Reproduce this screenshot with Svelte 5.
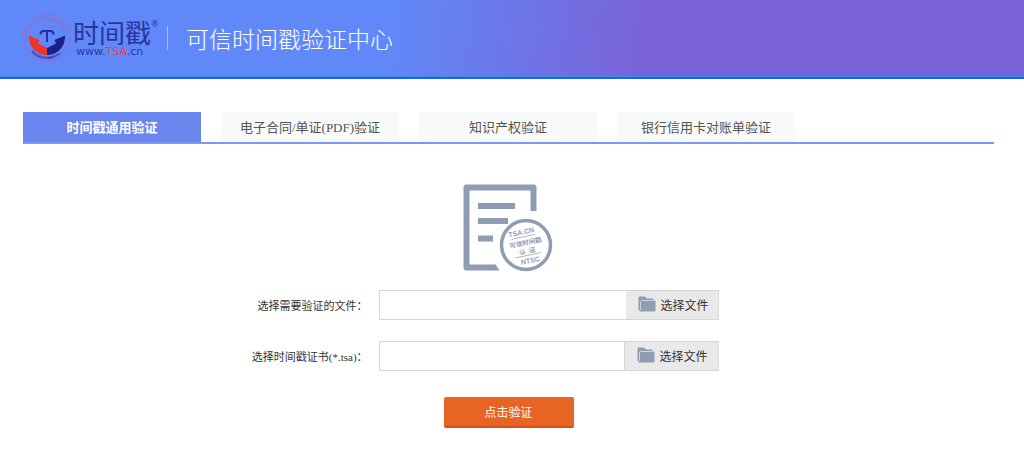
<script lang="ts">
  interface FileRow {
    id: string;
    label: string;
    divided: boolean;
  }

  const tabs = ['时间戳通用验证', '电子合同/单证(PDF)验证', '知识产权验证', '银行信用卡对账单验证'];

  const rows: FileRow[] = [
    { id: 'source-file', label: '选择需要验证的文件：', divided: false },
    { id: 'tsa-file', label: '选择时间戳证书(*.tsa)：', divided: true },
  ];

  let activeTab = $state(0);
  let paths = $state(['', '']);
</script>

<header class="header">
  <a class="logo" href="/">
    <svg class="emblem" viewBox="0 0 48 48" aria-hidden="true">
      <defs>
        <path id="ring-top" d="M5.5 30a19.3 19.3 0 1 1 37 0" />
        <path id="ring-bottom" d="M5.5 34a21 21 0 0 0 37 0" />
      </defs>
      <circle cx="24" cy="24" r="23.3" fill="none" stroke="#a566b4" stroke-width="0.9" />
      <circle cx="24" cy="24" r="18" fill="none" stroke="#8a70cc" stroke-width="0.6" />
      <text class="ring-en"><textPath href="#ring-top" startOffset="3">Certificate Time Stamp Authority</textPath></text>
      <text class="ring-cn"><textPath href="#ring-bottom" startOffset="5">联合信任时间戳服务中心</textPath></text>
      <path d="M15 13h18" stroke="#8a70cc" stroke-width="1.2" stroke-dasharray="1.5 0.8" />
      <path d="M6 21.5l10.5 4.500L15 29.500l9 4.500v7C13 41 5.500 32 6 21.500z" fill="#ee342b" />
      <path d="M42 21.500L31.500 26l1.500 3.500-9 4.500v7C35 41 42.500 32 42 21.500z" fill="#1b2089" />
      <path d="M17.500 20.500c0-2.500 1-3.500 3-3.500h7c2 0 3 1 3 3.500M24 17v11" fill="none" stroke="#25329b" stroke-width="2" />
    </svg>
    <span class="brand">
      <span class="brand-name">时间戳<sup>®</sup></span>
      <span class="brand-url">www.<em>TSA</em>.cn</span>
    </span>
  </a>
  <h1 class="title">可信时间戳验证中心</h1>
</header>

<main class="main">
  <nav class="tabs">
    {#each tabs as tab, i (tab)}
      <button type="button" class="tab" class:active={activeTab === i} onclick={() => (activeTab = i)}>{tab}</button>
    {/each}
  </nav>

  <form class="form" onsubmit={(e: Event) => e.preventDefault()}>
    <svg class="document" viewBox="0 0 92 88" aria-hidden="true">
      <path d="M70.500 27V3.500h-67v80H32" fill="none" stroke="#8f9db3" stroke-width="6" stroke-linejoin="round" />
      <path d="M31 80.500h1.500l4 6H31z" fill="#8f9db3" />
      <path d="M15 22h37M15 37h30M15 54.500h15" stroke="#8f9db3" stroke-width="6" />
      <circle cx="63" cy="61" r="24.500" fill="#fff" stroke="#8f9db3" stroke-width="3.500" />
      <g class="stamp" transform="rotate(-12 63 61)">
        <text x="61" y="50" font-size="7">TSA.CN</text>
        <path d="M50 52.500h24M50 71.500h26" stroke="#8f9db3" stroke-width="0.700" />
        <text x="63" y="61" font-size="6.500">可信时间戳</text>
        <text x="63" y="69.500" font-size="6.500">认&#160; 证</text>
        <text x="64" y="79.500" font-size="7">NTSC</text>
      </g>
    </svg>

    {#each rows as row, i (row.id)}
      <div class="row">
        <label for={row.id}>{row.label}</label>
        <div class="picker" class:divided={row.divided}>
          <input id={row.id} type="text" bind:value={paths[i]} />
          <button type="button" class="browse">
            <svg viewBox="0 0 18 16" aria-hidden="true">
              <path d="M1 1h6l2 2h6v2H4L2.500 6v8H1V2z" fill="#8f9db3" stroke="#8f9db3" stroke-linejoin="round" />
              <path d="M4 5h13v10H2V6h2z" fill="#8f9db3" stroke="#8f9db3" stroke-linejoin="round" />
              <path d="M2.500 14V5.500L3.500 4.500H16" fill="none" stroke="#dde2ea" stroke-width="0.800" />
            </svg>
            选择文件
          </button>
        </div>
      </div>
    {/each}

    <button type="submit" class="submit">点击验证</button>
  </form>
</main>

<style>
  :global(body) {
    margin: 0;
    background: #fff;
    font-family: 'Liberation Serif', 'Noto Sans CJK SC', serif;
  }
  .header {
    display: flex;
    align-items: center;
    height: 75px;
    padding: 0 0 2px 23px;
    border-bottom: 2px solid #2a5cf0;
    background: linear-gradient(97deg, #6188f8 0%, #6188f8 38%, #6c78e9 49%, #7a62d8 63%, #7a62d8 100%);
    box-shadow: inset 0 -1px #3490e8;
  }
  .logo {
    display: flex;
    align-items: center;
    gap: 2px;
    color: #29359f;
    text-decoration: none;
  }
  .emblem {
    width: 48px;
    height: 48px;
  }
  .ring-en {
    fill: #a95aa6;
    font-size: 4px;
  }
  .ring-cn {
    fill: #25329b;
    font-size: 3px;
    font-weight: 700;
  }
  .brand {
    display: flex;
    flex-direction: column;
    width: 84px;
  }
  .brand-name {
    font-family: 'Noto Sans CJK SC', sans-serif;
    font-size: 26px;
    line-height: 28px;
    white-space: nowrap;
  }
  .brand-name sup {
    font-family: 'DejaVu Sans', sans-serif;
    font-size: 8px;
    line-height: 0;
    vertical-align: 16px;
  }
  .brand-url {
    padding-left: 3px;
    font-family: 'DejaVu Sans', sans-serif;
    font-size: 11px;
    line-height: 12px;
  }
  .brand-url em {
    color: #e04355;
    font-style: normal;
  }
  .title {
    margin: 0 0 0 10px;
    padding-left: 18px;
    border-left: 1px solid #a9bffd;
    color: #fff;
    font-family: 'Noto Sans CJK SC', sans-serif;
    font-size: 23px;
    font-weight: 300;
    line-height: 24px;
  }
  .main {
    padding: 33px 30px 20px 23px;
  }
  .tabs {
    display: flex;
    gap: 20px;
    border-bottom: 2px solid #7d97f3;
  }
  .tab {
    width: 178px;
    height: 30px;
    padding: 0 0 2px;
    border: 0;
    background: #f8faf9;
    color: #555;
    font-family: inherit;
    font-size: 13px;
    cursor: pointer;
  }
  .tab.active {
    background: #6886ee;
    color: #fff;
    font-weight: 700;
  }
  .form {
    display: flex;
    flex-direction: column;
    align-items: center;
    padding-top: 40px;
  }
  .document {
    width: 92px;
    height: 88px;
    margin-bottom: 18px;
  }
  .stamp {
    fill: #8f9db3;
    font-family: 'Liberation Sans', 'Noto Sans CJK SC', sans-serif;
    font-weight: 700;
    text-anchor: middle;
  }
  .row {
    display: grid;
    grid-template-columns: 36% 340px;
    align-items: center;
    gap: 6px;
    width: 100%;
    margin-bottom: 21px;
  }
  .row label {
    padding-right: 5px;
    color: #333;
    font-size: 11px;
    text-align: right;
  }
  .picker {
    display: flex;
    box-sizing: border-box;
    height: 30px;
    border: 1px solid #d6d6d6;
  }
  .picker input {
    flex: 1;
    min-width: 0;
    padding: 0 8px;
    border: 0;
    outline: 0;
    font-size: 12px;
  }
  .browse {
    display: flex;
    align-items: center;
    gap: 5px;
    padding: 0 9px 2px 12px;
    border: 0;
    background: #e9e9e9;
    color: #333;
    font-family: 'Noto Sans CJK SC', sans-serif;
    font-size: 12px;
    cursor: pointer;
  }
  .browse svg {
    width: 18px;
    height: 16px;
  }
  .divided .browse {
    padding-right: 10px;
    border-left: 1px solid #d6d6d6;
  }
  .submit {
    width: 130px;
    height: 31px;
    margin-top: 5px;
    border: 0;
    border-bottom: 2px solid #d4521a;
    border-radius: 2px;
    background: #e86424;
    color: #fff;
    font-family: 'Noto Sans CJK SC', sans-serif;
    font-size: 12px;
    cursor: pointer;
  }
</style>
